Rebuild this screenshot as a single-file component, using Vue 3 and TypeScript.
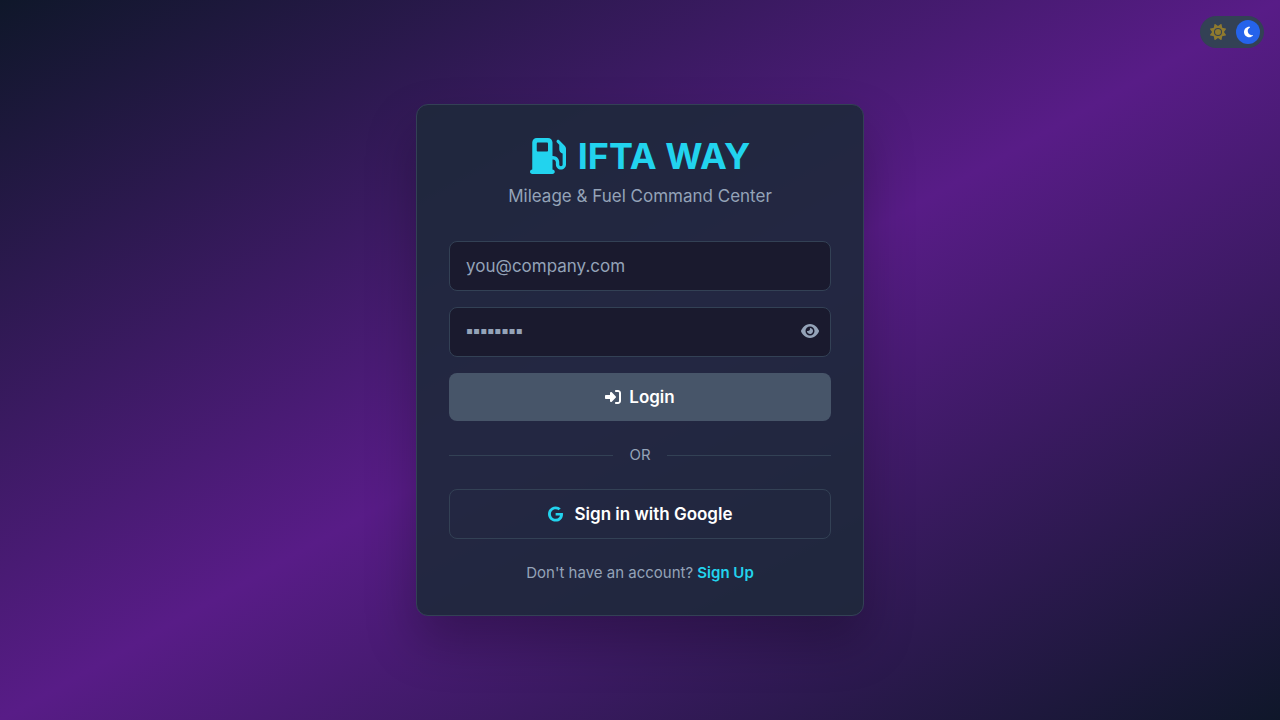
<script setup lang="ts">
import { ref } from 'vue'

const email = ref<string>('')
const password = ref<string>('')
const showPassword = ref<boolean>(false)
const dark = ref<boolean>(true)
</script>

<template>
  <div class="page">
    <button class="theme" type="button" aria-label="Toggle theme" :aria-pressed="dark" @click="dark = !dark">
      <span class="slot sun">
        <svg viewBox="0 0 512 512" width="16" height="16" aria-hidden="true"><path d="M361.5 1.2c5 2.1 8.6 6.6 9.6 11.9L391 121l107.9 19.8c5.3 1 9.8 4.6 11.9 9.6s1.5 10.7-1.6 15.2L446.9 256l62.3 90.3c3.1 4.5 3.7 10.2 1.6 15.2s-6.6 8.6-11.9 9.6L391 391 371.1 498.9c-1 5.3-4.6 9.8-9.6 11.9s-10.7 1.5-15.2-1.6L256 446.9l-90.3 62.3c-4.5 3.1-10.2 3.7-15.2 1.6s-8.6-6.6-9.6-11.9L121 391 13.1 371.1c-5.3-1-9.8-4.6-11.9-9.6s-1.5-10.7 1.6-15.2L65.1 256 2.8 165.7c-3.1-4.5-3.7-10.2-1.6-15.2s6.6-8.6 11.9-9.6L121 121 140.9 13.1c1-5.3 4.6-9.8 9.6-11.9s10.7-1.5 15.2 1.6L256 65.1 346.3 2.8c4.5-3.1 10.2-3.7 15.2-1.6zM160 256a96 96 0 1 1 192 0 96 96 0 1 1 -192 0zm224 0a128 128 0 1 0 -256 0 128 128 0 1 0 256 0z" /></svg>
      </span>
      <span class="slot knob">
        <svg viewBox="0 0 384 512" width="9" height="12" aria-hidden="true"><path d="M223.5 32C100 32 0 132.3 0 256S100 480 223.5 480c60.6 0 115.5-24.2 155.8-63.4c5-4.9 6.3-12.5 3.1-18.7s-10.1-9.7-17-8.5c-9.8 1.7-19.8 2.6-30.1 2.6c-96.9 0-175.5-78.8-175.5-176c0-65.8 36-123.1 89.3-153.3c6.1-3.5 9.2-10.5 7.7-17.3s-7.3-11.9-14.3-12.5c-6.3-.5-12.6-.8-19-.8z" /></svg>
      </span>
    </button>

    <main class="card">
      <header class="brand">
        <h1>
          <svg viewBox="0 0 512 512" width="36" height="36" aria-hidden="true"><path d="M32 64C32 28.7 60.7 0 96 0H256c35.3 0 64 28.7 64 64V256h8c48.6 0 88 39.4 88 88v32c0 13.3 10.7 24 24 24s24-10.7 24-24V222c-27.6-7.1-48-32.2-48-62V96L384 64c-8.8-8.8-8.8-23.2 0-32s23.2-8.8 32 0l77.3 77.3c12 12 18.7 28.3 18.7 45.3V168v24 32V376c0 39.8-32.2 72-72 72s-72-32.2-72-72V344c0-22.1-17.9-40-40-40h-8V448c17.7 0 32 14.3 32 32s-14.3 32-32 32H32c-17.7 0-32-14.3-32-32s14.3-32 32-32V64zM96 80v96c0 8.8 7.2 16 16 16H240c8.8 0 16-7.2 16-16V80c0-8.8-7.2-16-16-16H112c-8.8 0-16 7.2-16 16z" /></svg>
          <span>IFTA WAY</span>
        </h1>
        <p>Mileage &amp; Fuel Command Center</p>
      </header>

      <form class="form" @submit.prevent>
        <input v-model="email" class="field" type="email" aria-label="Email" placeholder="you@company.com" />
        <div class="secret">
          <input v-model="password" class="field password" :type="showPassword ? 'text' : 'password'" aria-label="Password" placeholder="▪▪▪▪▪▪▪▪" />
          <button class="reveal" type="button" aria-label="Show password" @click="showPassword = !showPassword">
            <svg viewBox="0 0 576 512" width="18" height="16" aria-hidden="true"><path d="M288 32c-80.8 0-145.5 36.8-192.6 80.6C48.6 156 17.3 208 2.5 243.7c-3.3 7.9-3.3 16.7 0 24.6C17.3 304 48.6 356 95.4 399.4C142.5 443.2 207.2 480 288 480s145.5-36.8 192.6-80.6c46.8-43.5 78.1-95.4 93-131.1c3.3-7.9 3.3-16.7 0-24.6c-14.9-35.7-46.2-87.7-93-131.1C433.5 68.8 368.8 32 288 32zM144 256a144 144 0 1 1 288 0 144 144 0 1 1 -288 0zm144-64c0 35.3-28.7 64-64 64c-7.1 0-13.9-1.2-20.3-3.3c-5.5-1.8-11.9 1.6-11.7 7.4c.3 6.9 1.3 13.8 3.2 20.7c13.7 51.2 66.4 81.6 117.6 67.9s81.6-66.4 67.9-117.6c-11.1-41.5-47.8-69.4-88.6-71.1c-5.8-.2-9.2 6.1-7.4 11.7c2.1 6.4 3.3 13.2 3.3 20.3z" /></svg>
          </button>
        </div>
        <button class="login" type="submit">
          <svg viewBox="0 0 512 512" width="16" height="16" aria-hidden="true"><path d="M217.9 105.9L340.7 228.7c7.2 7.2 11.3 17.1 11.3 27.3s-4.1 20.1-11.3 27.3L217.9 406.1c-6.4 6.4-15 9.9-24 9.9c-18.7 0-33.9-15.2-33.9-33.9l0-62.1L32 320c-17.7 0-32-14.3-32-32l0-64c0-17.7 14.3-32 32-32l128 0 0-62.1c0-18.7 15.2-33.9 33.9-33.9c9 0 17.6 3.6 24 9.9zM352 416l64 0c17.7 0 32-14.3 32-32l0-256c0-17.7-14.3-32-32-32l-64 0c-17.7 0-32-14.3-32-32s14.3-32 32-32l64 0c53 0 96 43 96 96l0 256c0 53-43 96-96 96l-64 0c-17.7 0-32-14.3-32-32s14.3-32 32-32z" /></svg>
          <span>Login</span>
        </button>
      </form>

      <div class="divider"><span>OR</span></div>

      <button class="google" type="button">
        <svg viewBox="0 0 488 512" width="15" height="16" aria-hidden="true"><path d="M488 261.8C488 403.3 391.1 504 248 504 110.8 504 0 393.2 0 256S110.8 8 248 8c66.8 0 123 24.5 166.3 64.9l-67.5 64.9C258.5 52.6 94.3 116.6 94.3 256c0 86.5 69.1 156.6 153.7 156.6 98.2 0 135-70.4 140.8-106.9H248v-85.3h236.1c2.3 12.7 3.9 24.9 3.9 41.4z" /></svg>
        <span>Sign in with Google</span>
      </button>

      <p class="signup">Don't have an account? <a href="#signup">Sign Up</a></p>
    </main>
  </div>
</template>

<style>
body {
  margin: 0;
  background: #0f172a;
}
</style>

<style scoped>
* {
  box-sizing: border-box;
}

.page {
  min-height: 100vh;
  padding: 16px;
  display: flex;
  align-items: center;
  justify-content: center;
  background: linear-gradient(to bottom right, #0f172a, #581c87, #0f172a);
  font-family: Inter, "Open Sans", sans-serif;
  font-size: 17px;
  line-height: 26px;
  color: #94a3b8;
}

svg {
  display: block;
  flex: none;
  fill: currentColor;
}

button {
  font: inherit;
  cursor: pointer;
}

.theme {
  position: absolute;
  top: 16px;
  right: 16px;
  width: 64px;
  height: 32px;
  padding: 4px;
  display: flex;
  justify-content: space-between;
  align-items: center;
  border: 0;
  border-radius: 16px;
  background: #334155;
}

.slot {
  width: 24px;
  height: 24px;
  display: flex;
  align-items: center;
  justify-content: center;
}

.sun {
  width: 28px;
  color: #eab308;
  opacity: 0.5;
}

.knob {
  border-radius: 50%;
  background: #2563eb;
  color: #fff;
}

.card {
  width: 100%;
  max-width: 448px;
  padding: 32px;
  border: 1px solid #334155;
  border-radius: 12px;
  background: rgba(30, 41, 59, 0.9);
  box-shadow: 0 25px 50px rgba(0, 0, 0, 0.25);
}

.brand {
  margin-bottom: 32px;
  text-align: center;
}

h1 {
  margin: 0 0 8px;
  display: flex;
  align-items: center;
  justify-content: center;
  gap: 12px;
  font-size: 36px;
  line-height: 38px;
  font-weight: 700;
  color: #22d3ee;
}

p {
  margin: 0;
}

.form {
  display: flex;
  flex-direction: column;
  gap: 16px;
}

.field {
  width: 100%;
  height: 50px;
  padding: 0 16px;
  border: 1px solid #334155;
  border-radius: 8px;
  outline: 0;
  background: #1a1a2e;
  color: #fff;
  font: inherit;
}

.field::placeholder {
  color: #94a3b8;
  opacity: 1;
}

.secret {
  position: relative;
}

.password {
  display: block;
  padding-right: 44px;
}

.password::placeholder {
  font-family: "Liberation Sans", sans-serif;
  font-size: 20px;
}

.reveal {
  position: absolute;
  top: 0;
  bottom: 2px;
  right: 0;
  padding: 0 12px;
  border: 0;
  background: transparent;
  color: #94a3b8;
}

.login,
.google {
  width: 100%;
  display: flex;
  align-items: center;
  justify-content: center;
  border-radius: 8px;
  color: #fff;
  font-weight: 600;
}

.login {
  height: 48px;
  gap: 8px;
  border: 0;
  background: #475569;
}

.google {
  height: 50px;
  gap: 12px;
  border: 1px solid #334155;
  background: transparent;
}

.google svg {
  color: #22d3ee;
}

.divider {
  margin: 24px 0;
  display: flex;
  align-items: center;
  gap: 16px;
  font-size: 15px;
  line-height: 20px;
}

.divider::before,
.divider::after {
  content: "";
  flex: 1;
  height: 1px;
  background: #334155;
}

.signup {
  margin-top: 24px;
  text-align: center;
  font-size: 15px;
  line-height: 20px;
}

.signup a {
  color: #22d3ee;
  font-weight: 600;
  text-decoration: none;
}
</style>
